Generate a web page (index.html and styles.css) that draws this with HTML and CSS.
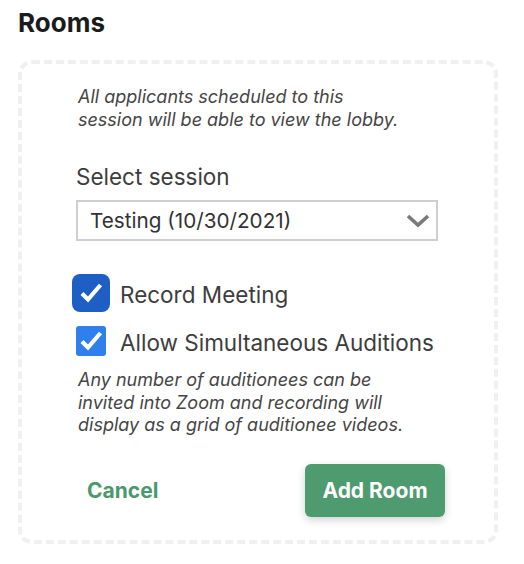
FILE: index.html
```html
<!DOCTYPE html>
<html>
<head>
<meta charset="utf-8">
<link rel="stylesheet" href="styles.css">
</head>
<body>
<main class="page">
  <h1 class="title">Rooms</h1>
  <section class="card">
    <p class="note note-top">All applicants scheduled to this<br>session will be able to view the lobby.</p>
    <div class="field">
      <div class="field-label">Select session</div>
      <div class="select">
        <span class="select-value">Testing (10/30/2021)</span>
        <svg class="chevron" width="24" height="14" viewBox="0 0 24 14"><polyline points="2,2 12,11 22,2" fill="none" stroke="#7a7a7a" stroke-width="3.6" stroke-linecap="butt" stroke-linejoin="miter"/></svg>
      </div>
    </div>
    <div class="checks">
      <label class="check">
        <span class="box box-focus"><svg width="30" height="30" viewBox="0 0 30 30"><polyline points="6,15.5 12,21.5 24.5,7" fill="none" stroke="#fff" stroke-width="4.2"/></svg></span>
        <span class="check-text">Record Meeting</span>
      </label>
      <label class="check">
        <span class="box"><svg width="30" height="30" viewBox="0 0 30 30"><polyline points="6,15.5 12,21.5 24.5,7" fill="none" stroke="#fff" stroke-width="4.2"/></svg></span>
        <span class="check-text">Allow Simultaneous Auditions</span>
      </label>
    </div>
    <p class="note note-bottom">Any number of auditionees can be<br>invited into Zoom and recording will<br>display as a grid of auditionee videos.</p>
    <div class="actions">
      <button class="btn-link">Cancel</button>
      <button class="btn-primary">Add Room</button>
    </div>
  </section>
</main>
</body>
</html>
```

FILE: styles.css
```css
* { box-sizing: border-box; }
html, body { margin: 0; padding: 0; background: #fff; }
body { font-family: Inter, "Noto Sans", sans-serif; color: #3b3b3b; }
.page { padding: 0 18px; }
.title {
  margin: 7.5px 0 22.5px;
  font-size: 26px;
  line-height: 30px;
  font-weight: 700;
  color: #1b1b1b;
}
.card {
  width: 480px;
  border: 4px dashed #f0f0f0;
  border-radius: 14px;
  padding: 22px 56px 23px 54px;
}
.note {
  margin: 0;
  font-style: italic;
  font-size: 18px;
  line-height: 22.5px;
  color: #454545;
  padding-left: 2px;
}
.field { margin-top: 32px; }
.field-label {
  font-size: 22.5px;
  line-height: 28px;
  color: #3d3d3d;
}
.select {
  margin-top: 9px;
  height: 41px;
  border: 2px solid #cfcfcf;
  display: flex;
  align-items: center;
  justify-content: space-between;
  padding: 0 6px 0 12px;
  background: #fff;
}
.select-value { font-size: 20.7px; color: #333; }
.chevron { display: block; }
.checks {
  margin-top: 37px;
  display: flex;
  flex-direction: column;
  gap: 18px;
}
.check {
  display: flex;
  align-items: flex-start;
  gap: 14px;
  height: 30px;
}
.box {
  width: 30px;
  height: 30px;
  border-radius: 3px;
  background: #2f7fec;
  flex: none;
}
.box svg { display: block; }
.box-focus {
  background: #1f5fc5;
  box-shadow: 0 0 0 4px #1f5fc5;
  border-radius: 4px;
}
.check-text {
  font-size: 22.5px;
  line-height: 30px;
  margin-top: 2px;
  color: #3d3d3d;
}
.note-bottom { margin-top: 13px; }
.actions {
  margin-top: 27.5px;
  margin-right: -7px;
  display: flex;
  justify-content: space-between;
  align-items: center;
}
.btn-link {
  border: 0;
  background: none;
  font-family: Inter, sans-serif;
  font-weight: 700;
  font-size: 21px;
  color: #4a996d;
  padding: 0 11px;
  cursor: pointer;
}
.btn-primary {
  border: 0;
  width: 140px;
  height: 53px;
  border-radius: 6px;
  background: #4e9b70;
  color: #fff;
  font-family: Inter, sans-serif;
  font-weight: 700;
  font-size: 21px;
  box-shadow: 0 3px 8px rgba(0,0,0,0.18);
  cursor: pointer;
}
```
